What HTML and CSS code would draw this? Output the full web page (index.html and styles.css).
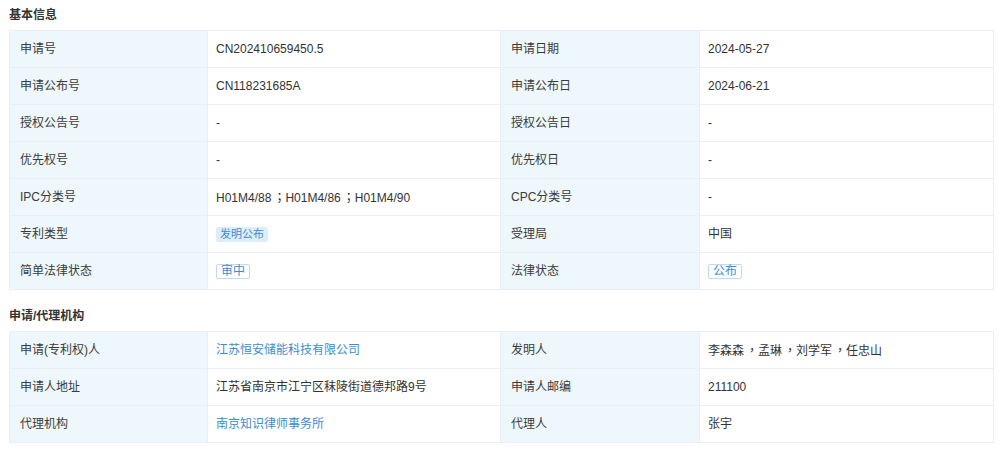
FILE: index.html
```html
<!DOCTYPE html>
<html lang="zh-CN">
<head>
<meta charset="utf-8">
<link rel="stylesheet" href="styles.css">
</head>
<body>
<div class="page">
  <section class="block">
    <h3 class="title">基本信息</h3>
    <table class="info">
      <colgroup><col class="c-label1"><col class="c-val1"><col class="c-label2"><col class="c-val2"></colgroup>
      <tr><th>申请号</th><td>CN202410659450.5</td><th>申请日期</th><td>2024-05-27</td></tr>
      <tr><th>申请公布号</th><td>CN118231685A</td><th>申请公布日</th><td>2024-06-21</td></tr>
      <tr><th>授权公告号</th><td>-</td><th>授权公告日</th><td>-</td></tr>
      <tr><th>优先权号</th><td>-</td><th>优先权日</th><td>-</td></tr>
      <tr><th>IPC分类号</th><td>H01M4/88<span class="punct">；</span>H01M4/86<span class="punct">；</span>H01M4/90</td><th>CPC分类号</th><td>-</td></tr>
      <tr><th>专利类型</th><td><span class="tag tag-fill">发明公布</span></td><th>受理局</th><td>中国</td></tr>
      <tr><th>简单法律状态</th><td><span class="tag tag-line">审中</span></td><th>法律状态</th><td><span class="tag tag-line">公布</span></td></tr>
    </table>
  </section>
  <section class="block block2">
    <h3 class="title">申请/代理机构</h3>
    <table class="info">
      <colgroup><col class="c-label1"><col class="c-val1"><col class="c-label2"><col class="c-val2"></colgroup>
      <tr><th>申请(专利权)人</th><td><a class="link" href="#">江苏恒安储能科技有限公司</a></td><th>发明人</th><td>李森森<span class="punct">，</span>孟琳<span class="punct">，</span>刘学军<span class="punct">，</span>任忠山</td></tr>
      <tr><th>申请人地址</th><td>江苏省南京市江宁区秣陵街道德邦路9号</td><th>申请人邮编</th><td>211100</td></tr>
      <tr><th>代理机构</th><td><a class="link" href="#">南京知识律师事务所</a></td><th>代理人</th><td>张宇</td></tr>
    </table>
  </section>
</div>
</body>
</html>
```
FILE: styles.css
```css
* { box-sizing: border-box; }
html, body { margin: 0; padding: 0; background: #fff; }
body {
  font-family: "Liberation Sans", "Noto Sans CJK SC", sans-serif;
  font-size: 12px;
  color: #333;
}
.page { padding: 7px 8px 0 9px; width: 1001px; }
.block2 { margin-top: 18px; }
.title {
  margin: 0;
  font-size: 12px;
  font-weight: bold;
  color: #333;
  line-height: 16px;
  height: 23px;
}
.info {
  width: 984px;
  border-collapse: collapse;
  table-layout: fixed;
}
.c-label1 { width: 198px; }
.c-val1 { width: 293px; }
.c-label2 { width: 199px; }
.c-val2 { width: 294px; }
.info th, .info td {
  height: 37px;
  padding: 0 10px;
  border: 1px solid #e9eff3;
  text-align: left;
  font-weight: normal;
  vertical-align: middle;
  line-height: 16px;
}
.info th { background: #eef7fc; color: #3a3a3a; }
.info td { background: #fff; padding-left: 8px; }
.punct {
  font-family: "Noto Sans CJK TC", "Noto Sans CJK SC", sans-serif;
  display: inline-block;
  width: 14px;
  text-align: center;
  text-indent: 2px;
}
.tag {
  display: inline-block;
  border-radius: 2px;
  color: #3d8cd0;
  vertical-align: middle;
}
.tag-fill {
  background: #ddeefb;
  font-size: 11px;
  padding: 1px 4px;
  line-height: 13px;
}
.tag-line {
  border: 1px solid #bcdcf3;
  background: #fff;
  font-size: 12px;
  padding: 0 4px;
  line-height: 13px;
}
.link { color: #3d8cd0; text-decoration: none; }
```
